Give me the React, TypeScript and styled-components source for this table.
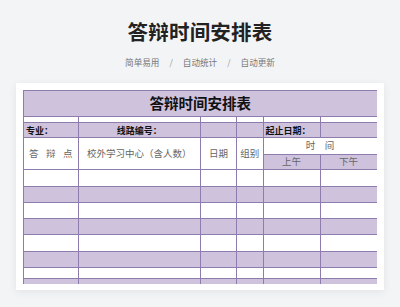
import React from "react";
import styled, { createGlobalStyle } from "styled-components";

const FILL = "#cec2dd";
const LINE = "#8f7cae";

const GlobalStyle = createGlobalStyle`
  html, body { margin: 0; padding: 0; }
  body {
    background: #f3f4f6;
    font-family: "Noto Sans CJK SC", "Noto Sans", sans-serif;
    width: 400px;
    height: 307px;
    overflow: hidden;
  }
`;

const Page = styled.div`
  display: flex;
  flex-direction: column;
  align-items: center;
  padding-top: 16px;
`;

const Title = styled.h1`
  margin: 0;
  font-size: 20.5px;
  line-height: 30px;
  font-weight: 700;
  color: #222;
  letter-spacing: 0.2px;
`;

const Subtitle = styled.div`
  margin-top: 10px;
  display: flex;
  align-items: center;
  font-size: 8.6px;
  line-height: 12px;
  color: #777;
`;

const Sep = styled.span`
  margin: 0 10px;
  color: #999;
`;

const Card = styled.div`
  margin-top: 15px;
  width: 368px;
  height: 207px;
  background: #fff;
  box-sizing: border-box;
  padding: 7px 7px 0 7px;
  box-shadow: 0 2px 8px rgba(0, 0, 0, 0.07);
`;

const Clip = styled.div`
  height: 194px;
  overflow: hidden;
`;

const Table = styled.table`
  width: 354px;
  border-collapse: collapse;
  table-layout: fixed;
  border: 1px solid ${LINE};
`;

const Row = styled.tr<{ $h: number; $fill?: boolean }>`
  height: ${(p) => p.$h}px;
  background: ${(p) => (p.$fill ? FILL : "#fff")};
`;

const Cell = styled.td<{ $fill?: boolean; $align?: string; $bold?: boolean; $size?: number }>`
  border: 1px solid ${LINE};
  padding: 0 2px;
  box-sizing: border-box;
  background: ${(p) => (p.$fill === undefined ? "transparent" : p.$fill ? FILL : "#fff")};
  text-align: ${(p) => p.$align || "center"};
  font-weight: ${(p) => (p.$bold ? 700 : 400)};
  font-size: ${(p) => p.$size || 9.5}px;
  color: ${(p) => (p.$bold ? "#111" : "#666")};
  line-height: 1;
  white-space: nowrap;
  overflow: hidden;
  vertical-align: middle;
`;

const Spread = styled.div`
  display: flex;
  justify-content: space-between;
  padding: 0 3px 0 3px;
`;

const widths = [54.5, 122.5, 36, 26.5, 57, 57];
const dataRows = [17, 16, 16, 16, 17, 16, 11, 16];

export default function App() {
  return (
    <>
      <GlobalStyle />
      <Page>
        <Title>答辩时间安排表</Title>
        <Subtitle>
          <span>简单易用</span>
          <Sep>/</Sep>
          <span>自动统计</span>
          <Sep>/</Sep>
          <span>自动更新</span>
        </Subtitle>
        <Card>
          <Clip>
            <Table>
              <colgroup>
                {widths.map((w, i) => (
                  <col key={i} style={{ width: w }} />
                ))}
              </colgroup>
              <tbody>
                <Row $h={26} $fill>
                  <Cell colSpan={6} $bold $size={14.5}>
                    答辩时间安排表
                  </Cell>
                </Row>
                <Row $h={6}>
                  {widths.map((_, i) => (
                    <Cell key={i} />
                  ))}
                </Row>
                <Row $h={15} $fill>
                  <Cell $bold $size={9} $align="left">专业：</Cell>
                  <Cell $bold $size={9}>线路编号：</Cell>
                  <Cell />
                  <Cell />
                  <Cell $bold $size={9} $align="left">起止日期：</Cell>
                  <Cell />
                </Row>
                <Row $h={17}>
                  <Cell rowSpan={2} $fill={false}>
                    <Spread>
                      <span>答</span>
                      <span>辩</span>
                      <span>点</span>
                    </Spread>
                  </Cell>
                  <Cell rowSpan={2} $fill={false}>校外学习中心（含人数）</Cell>
                  <Cell rowSpan={2} $fill={false}>日期</Cell>
                  <Cell rowSpan={2} $fill={false}>组别</Cell>
                  <Cell colSpan={2}>时　间</Cell>
                </Row>
                <Row $h={15} $fill>
                  <Cell>上午</Cell>
                  <Cell>下午</Cell>
                </Row>
                {dataRows.map((h, r) => (
                  <Row key={r} $h={h} $fill={r % 2 === 1}>
                    {widths.map((_, i) => (
                      <Cell key={i} />
                    ))}
                  </Row>
                ))}
              </tbody>
            </Table>
          </Clip>
        </Card>
      </Page>
    </>
  );
}
